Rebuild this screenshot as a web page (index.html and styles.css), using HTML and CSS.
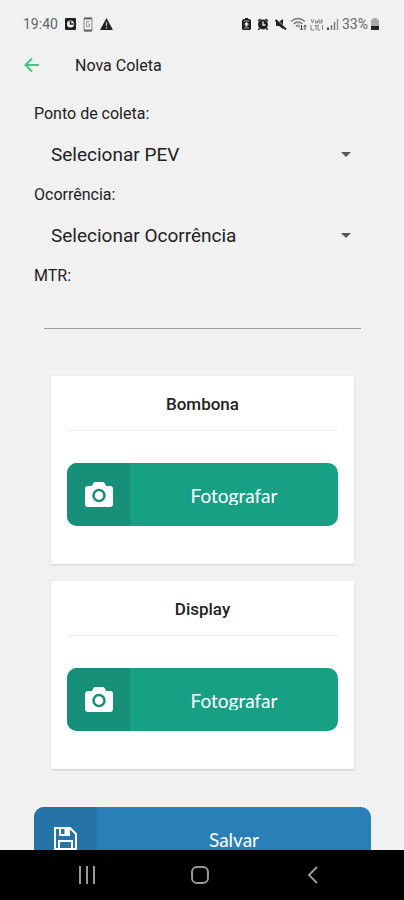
FILE: index.html
```html
<!DOCTYPE html>
<html lang="pt-BR">
<head>
  <meta charset="UTF-8" />
  <meta name="viewport" content="width=device-width, initial-scale=1" />
  <title>Nova Coleta</title>
  <link rel="stylesheet" href="styles.css">
</head>
<body>

  <div class="status">
    <div class="status-group left">
      <span class="hora">19:40</span>
      <svg width="11" height="12" viewBox="0 0 11 12"><rect width="11" height="12" rx="1" fill="#222"/><circle cx="5.5" cy="6" r="3.5" fill="#f1f1f1"/><path d="M5.500 3v3h3" stroke="#222" stroke-width="1.500" fill="none"/></svg>
      <svg width="10" height="15" viewBox="0 0 10 15"><rect x="1" y="1" width="8" height="13" rx="1" fill="none" stroke="#888"/><path d="M1 1.500h8M1 13.500h8" stroke="#666" stroke-width="2"/><path d="M6.500 4.500h-3v5h3v-2.500h-1.500" fill="none" stroke="#999"/></svg>
      <svg width="13" height="12" viewBox="0 0 13 12"><path d="M6.500 0L13 12H0z" fill="#222"/><path d="M6.500 4v4M6.500 9v1.500" stroke="#bbb" stroke-width="1.300"/></svg>
    </div>
    <div class="status-group right">
      <svg width="9" height="12" viewBox="0 0 9 12"><path d="M3 0h3v1h2l1 2v8l-1 1H1l-1-1V3l1-2h2z" fill="#222"/><path d="M2 3h5M2 10h5" stroke="#aaa"/><path d="M4.500 4L7 6.500H5.500V8.500h-2v-2H2z" fill="#eee"/></svg>
      <svg width="12" height="12" viewBox="0 0 12 12"><path d="M1 3l2.500-2M11 3L8.500 1M2.500 10L1.500 12M9.500 10l1 2" stroke="#222" stroke-width="1.500"/><circle cx="6" cy="6.500" r="5" fill="#222"/><path d="M6 3.500v3.500h2.500" fill="none" stroke="#eee" stroke-width="1.300"/></svg>
      <svg width="12" height="12" viewBox="0 0 12 12"><path d="M1 4h2.500L8 1v10L4 8H1z" fill="#222"/><path d="M1 1l10 10" stroke="#f1f1f1" stroke-width="1.500"/><path d="M.5 2l10.500 9.500" stroke="#222" stroke-width="2"/></svg>
      <svg width="17" height="14" viewBox="0 0 17 14"><path d="M1 4.500Q8 -1.500 15 4.500M3.500 7Q8 3 12.500 7M6 9.500Q8 7.500 10 9.500" fill="none" stroke="#777" stroke-width="1.300"/><path d="M8 4v7" stroke="#aaa"/><path d="M11.500 8v5M10 11.500l1.500 1.500 1.500-1.500M15 13V8M13.700 9.500L15 8l1.500 1.500" fill="none" stroke="#444"/></svg>
      <svg width="14" height="13" viewBox="0 0 14 13"><path d="M1 1l1.500 4L4 1M5.500 3h2v2h-2zM9 1v4h3V1M9 3h3M1 7v5h3M6 7v5M4.500 7.500h3M9 7h-1v5h2M12.500 7v5" fill="none" stroke="#888"/></svg>
      <svg width="12" height="12" viewBox="0 0 12 12"><path d="M1 9.500V12" stroke="#444" stroke-width="2"/><path d="M4.500 7v5M7.500 4v8" stroke="#777" stroke-width="1.500"/><path d="M10.500 1v11" stroke="#999" stroke-width="1.500"/></svg>
      <span class="bateria">33%</span>
      <svg width="8" height="12" viewBox="0 0 8 12"><path d="M2 0h4v1.500h2V8H0V1.500h2z" fill="#aaa"/><path d="M0 8h8v4H0z" fill="#222"/></svg>
    </div>
  </div>

  <header class="topo">
    <button class="voltar" type="button" aria-label="Voltar">
      <svg width="16" height="16" viewBox="0 0 16 16"><path d="M15 8H2M8 1.500L1.500 8 8 14.500" fill="none" stroke="#40c783" stroke-width="2"/></svg>
    </button>
    <h1>Nova Coleta</h1>
  </header>

  <main class="conteudo">
    <form class="form">
      <label for="pev">Ponto de coleta:</label>
      <div class="campo">
        <select id="pev"><option>Selecionar PEV</option></select>
        <svg class="seta" width="10" height="5" viewBox="0 0 10 5"><path d="M0 0h10L5 5z" fill="#555"/></svg>
      </div>

      <label for="ocorrencia">Ocorrência:</label>
      <div class="campo">
        <select id="ocorrencia"><option>Selecionar Ocorrência</option></select>
        <svg class="seta" width="10" height="5" viewBox="0 0 10 5"><path d="M0 0h10L5 5z" fill="#555"/></svg>
      </div>

      <label for="mtr">MTR:</label>
      <input class="mtr" id="mtr" type="text">

      <div class="cards">
        <section class="card">
          <h2>Bombona</h2>
          <button class="botao verde" type="button">
            <span class="icone">
              <svg width="28" height="25" viewBox="0 0 28 25"><path d="M3 4h4l1-2.500Q9 0 10 0h8q1 0 2 1.500L21 4h4q3 0 3 3v15q0 3-3 3H3q-3 0-3-3V7q0-3 3-3z" fill="#fff"/><circle cx="14" cy="13.500" r="5.500" fill="none" stroke="#169078" stroke-width="2.500"/></svg>
            </span>
            <span class="texto">Fotografar</span>
          </button>
        </section>

        <section class="card">
          <h2>Display</h2>
          <button class="botao verde" type="button">
            <span class="icone">
              <svg width="28" height="25" viewBox="0 0 28 25"><path d="M3 4h4l1-2.500Q9 0 10 0h8q1 0 2 1.500L21 4h4q3 0 3 3v15q0 3-3 3H3q-3 0-3-3V7q0-3 3-3z" fill="#fff"/><circle cx="14" cy="13.500" r="5.500" fill="none" stroke="#169078" stroke-width="2.500"/></svg>
            </span>
            <span class="texto">Fotografar</span>
          </button>
        </section>
      </div>

      <button class="botao azul" type="button">
        <span class="icone">
          <svg width="23" height="23" viewBox="0 0 23 23"><path d="M1 1h15l6 6v15H1zM6 1v7h9V1M5 22v-8h13v8" fill="none" stroke="#fff" stroke-width="2"/><path d="M10.500 1H15v7h-4.500z" fill="#fff"/></svg>
        </span>
        <span class="texto">Salvar</span>
      </button>
    </form>
  </main>

  <nav class="navegacao">
    <button type="button" aria-label="Recentes">
      <svg width="18" height="18" viewBox="0 0 18 18"><path d="M2 0v18M9 0v18M16 0v18" stroke="#999" stroke-width="2"/></svg>
    </button>
    <button type="button" aria-label="Início">
      <svg width="18" height="18" viewBox="0 0 18 18"><rect x="1" y="1" width="16" height="16" rx="5" fill="none" stroke="#999" stroke-width="2"/></svg>
    </button>
    <button type="button" aria-label="Voltar">
      <svg width="18" height="18" viewBox="0 0 18 18"><path d="M13 1L5 9l8 8" fill="none" stroke="#999" stroke-width="2"/></svg>
    </button>
  </nav>

</body>
</html>
```
FILE: styles.css
```css
* {
  box-sizing: border-box;
}
body {
  display: flex;
  flex-direction: column;
  height: 100vh;
  margin: 0;
  background-color: #f1f1f1;
  color: #222;
  font-family: Roboto, sans-serif;
  font-size: 16px;
}
svg {
  display: block;
  flex-shrink: 0;
}
button {
  border: 0;
  padding: 0;
  background: none;
  font-family: inherit;
  cursor: pointer;
}
.status {
  display: flex;
  justify-content: space-between;
  align-items: center;
  height: 48px;
  padding: 0 25px 0 23px;
  color: #666;
  font-size: 14px;
}
.status-group {
  display: flex;
  align-items: center;
}
.left {
  gap: 7px;
}
.right {
  gap: 3px;
}
.right svg:nth-child(-n+2) {
  margin-right: 3px;
}
.topo {
  display: flex;
  align-items: center;
  gap: 35px;
  height: 34px;
  padding: 0 24px;
}
.topo h1 {
  margin: 0;
  font-size: 16px;
  font-weight: 400;
}
.conteudo {
  flex: 1;
  min-height: 0;
  overflow: hidden;
}
.form {
  display: flex;
  flex-direction: column;
  padding: 20px 33px 20px 34px;
}
.form label {
  line-height: 24px;
}
.campo {
  display: grid;
  align-items: center;
  height: 57px;
}
.campo select,
.seta {
  grid-area: 1 / 1;
}
.campo select {
  appearance: none;
  width: 100%;
  height: 100%;
  padding: 0 40px 0 17px;
  border: 0;
  background: none;
  color: #222;
  font-family: inherit;
  font-size: 19px;
}
.seta {
  justify-self: end;
  margin-right: 20px;
  pointer-events: none;
}
.mtr {
  height: 41px;
  margin: 0 10px;
  padding: 0 4px;
  border: 0;
  border-bottom: 1px solid #9a9fa8;
  border-radius: 0;
  background: none;
  font-family: inherit;
  font-size: 16px;
  outline: none;
}
.cards {
  display: flex;
  flex-direction: column;
  gap: 17px;
  padding: 47px 17px 38px;
}
.card {
  padding: 16px 16px 38px;
  background-color: #fff;
  box-shadow: 0 1px 2px #c8cccf;
}
.card h2 {
  margin: 0 0 32px;
  padding-bottom: 14px;
  border-bottom: 1px solid #ededed;
  font-size: 17px;
  line-height: 24px;
  font-weight: 500;
  text-align: center;
}
.botao {
  display: flex;
  align-items: center;
  width: 100%;
  height: 63px;
  border-radius: 10px;
  overflow: hidden;
  color: #fff;
  font-family: Lato, sans-serif;
  font-size: 19px;
}
.icone {
  display: flex;
  justify-content: center;
  align-items: center;
  width: 63px;
  height: 100%;
}
.texto {
  flex: 1;
  padding-top: 2px;
  line-height: 19px;
}
.verde {
  background-color: #18a085;
}
.verde .icone {
  background-color: #169078;
}
.verde .texto {
  overflow: hidden;
}
.azul {
  background-color: #2980b9;
}
.azul .icone {
  background-color: #2573a7;
}
.navegacao {
  display: flex;
  justify-content: space-around;
  align-items: center;
  height: 50px;
  padding: 0 34px 0 30px;
  background-color: #000;
}
```
